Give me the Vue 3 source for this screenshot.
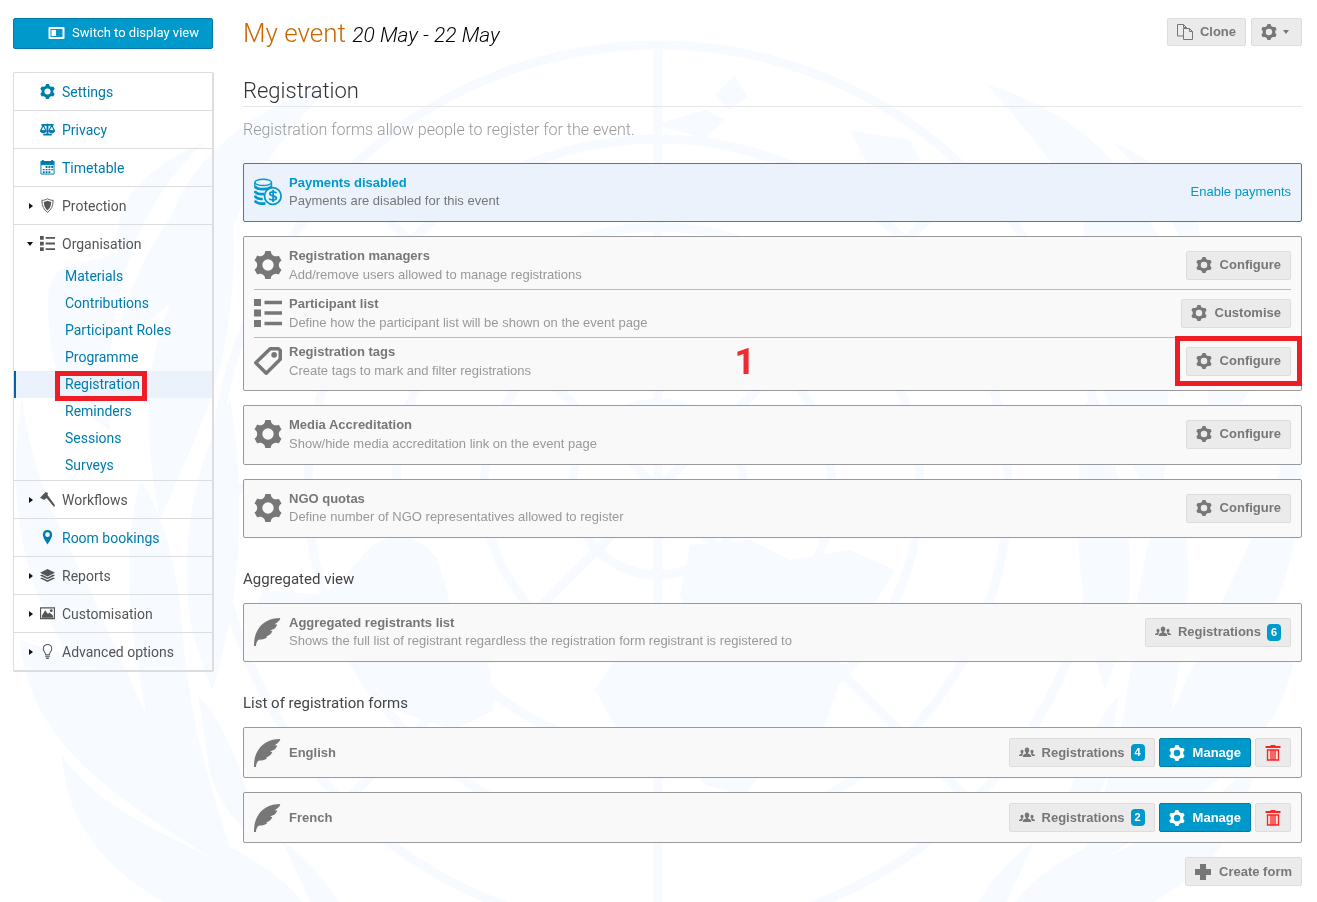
<script setup>
const menuTop = [
  { label: 'Settings', icon: 'gear', link: true },
  { label: 'Privacy', icon: 'scales', link: true },
  { label: 'Timetable', icon: 'calendar', link: true },
  { label: 'Protection', icon: 'shield' },
  {
    label: 'Organisation',
    icon: 'list',
    open: true,
    children: ['Materials', 'Contributions', 'Participant Roles', 'Programme', 'Registration', 'Reminders', 'Sessions', 'Surveys'],
  },
  { label: 'Workflows', icon: 'hammer' },
  { label: 'Room bookings', icon: 'pin', link: true },
  { label: 'Reports', icon: 'stack' },
  { label: 'Customisation', icon: 'image' },
  { label: 'Advanced options', icon: 'bulb' },
]

const groups = [
  {
    roomy: true,
    note: '1',
    rows: [
      { icon: 'gear', title: 'Registration managers', text: 'Add/remove users allowed to manage registrations', action: 'Configure' },
      { icon: 'list', title: 'Participant list', text: 'Define how the participant list will be shown on the event page', action: 'Customise' },
      { icon: 'tag', title: 'Registration tags', text: 'Create tags to mark and filter registrations', action: 'Configure', marked: true },
    ],
  },
  {
    roomy: true,
    rows: [{ icon: 'gear', title: 'Media Accreditation', text: 'Show/hide media accreditation link on the event page', action: 'Configure' }],
  },
  {
    rows: [{ icon: 'gear', title: 'NGO quotas', text: 'Define number of NGO representatives allowed to register', action: 'Configure' }],
  },
]

const forms = [
  { name: 'English', count: 4 },
  { name: 'French', count: 2 },
]
</script>

<template>
  <svg class="sprite" aria-hidden="true">
    <symbol id="i-gear" viewBox="0 0 32 32">
      <path d="M29.181 19.07c-1.679-2.908-.669-6.634 2.255-8.328l-3.145-5.447c-.898.527-1.943.829-3.058.829-3.361 0-6.085-2.742-6.085-6.125h-6.289c.008 1.044-.252 2.103-.811 3.07-1.679 2.908-5.411 3.897-8.339 2.211L.565 10.727c.905.515 1.689 1.268 2.246 2.234 1.676 2.903.672 6.623-2.241 8.319l3.145 5.447c.895-.522 1.935-.821 3.044-.821 3.35 0 6.067 2.725 6.084 6.092h6.289c-.003-1.034.259-2.08.811-3.038 1.676-2.903 5.399-3.894 8.325-2.219l3.145-5.447c-.899-.515-1.678-1.266-2.232-2.226zM16 22.479a6.479 6.479 0 1 1 0-12.958 6.479 6.479 0 0 1 0 12.958z" />
    </symbol>
    <symbol id="i-list" viewBox="0 0 32 32">
      <path d="M0 0h8v8H0zM12 2h20v4H12zM0 12h8v8H0zM12 14h20v4H12zM0 24h8v8H0zM12 26h20v4H12z" />
    </symbol>
    <symbol id="i-tag" viewBox="0 0 32 32">
      <path d="M18.500 2h9.500l2 2v10L14 30 2 18z" fill="none" stroke="currentColor" stroke-width="4" stroke-linejoin="round" />
      <circle cx="23" cy="9" r="3.200" />
    </symbol>
    <symbol id="i-quill" viewBox="0 0 32 32">
      <path d="M0 32C0 25 1 19 4 14 9 5 18 0 30 0c0 2-2 4-3.500 5l-3 2 3 .5c-.5 2-1.800 4-4 5.200l-4 1.500 2.500 1c-1 2-2.500 4-5 5l-2 1 1 .8c-2 2-5 2.700-8.500 2.700C4 25 2.500 28 2.200 32z" />
    </symbol>
    <symbol id="i-coins" viewBox="0 0 32 32">
      <g fill="none" stroke="currentColor" stroke-width="2">
        <ellipse cx="10.500" cy="5" rx="9.500" ry="3.500" stroke-width="1.600" />
        <path d="M1 9.500c2 4 16 4.500 19 0M1 15c1.500 3 6 3.700 10.500 3.300M1 20.500c1.500 3 5 3.700 9 3.500M1 26c2 3 7 3.700 12 3" stroke-width="3" />
        <path d="M1 5v5M20 5v5M1 15v2M1 20v2M1 26v1" stroke-width="1.600" />
        <circle cx="21.500" cy="20.500" r="9.500" />
        <path d="M25.500 17.500c-.5-2-7.500-2.500-7.500.5s7.500 2 7.500 5-7.500 2.500-8 .3M21.800 13.500v14" />
      </g>
    </symbol>
    <symbol id="i-scales" viewBox="0 0 32 32">
      <path d="M3 4h11a3 3 0 0 1 4 0h11v4H18v17h7v4H7v-4h7V8H3z" />
      <path d="M7 7l-6 12h12zM25 7l-6 12h12z" fill="none" stroke="currentColor" stroke-width="2.500" />
      <path d="M0 18h14c0 8-14 8-14 0zM18 18h14c0 8-14 8-14 0z" />
    </symbol>
    <symbol id="i-calendar" viewBox="0 0 32 32">
      <path d="M1 2h3V0h4v2h16V0h4v2h3v8H1z" />
      <path d="M2 10h28v20H2z" fill="none" stroke="currentColor" stroke-width="2" />
      <path d="M12 13h4v4h-4zM18 13h4v4h-4zM24 13h4v4h-4zM6 19h4v3H6zM12 19h4v3h-4zM18 19h4v3h-4zM24 19h4v3h-4zM6 24h4v4H6zM12 24h4v4h-4zM18 24h4v4h-4z" />
    </symbol>
    <symbol id="i-shield" viewBox="0 0 32 32">
      <path d="M16 1.500c4 2.500 8 3.500 12 3.500 0 12-4 20-12 25.500C8 25 4 17 4 5c4 0 8-1 12-3.500z" fill="none" stroke="currentColor" stroke-width="2" />
      <path d="M16 6c3 1.500 5.500 2.300 8 2.600C23.500 17 21 22.500 16 26.500 11 22.500 8.500 17 8 8.600 10.500 8.300 13 7.500 16 6z" />
    </symbol>
    <symbol id="i-hammer" viewBox="0 0 32 32">
      <path d="M0 12L12 0l5 2-1 4 2 3 14 19-2 4-16-19-5 4z" />
    </symbol>
    <symbol id="i-pin" viewBox="0 0 32 32">
      <path d="M16 0c6 0 10 4.300 10 9.800C26 17 16 31 16 31S6 17 6 9.800C6 4.300 10 0 16 0zm0 5a5 5 0 1 0 0 10 5 5 0 0 0 0-10z" />
    </symbol>
    <symbol id="i-stack" viewBox="0 0 32 32">
      <path d="M16 2l16 8-16 8-16-8zM4 14l12 6 12-6 4 2-16 8-16-8zM4 20l12 6 12-6 4 2-16 8-16-8z" />
    </symbol>
    <symbol id="i-image" viewBox="0 0 32 32">
      <path d="M1.200 4h29.600v23H1.200z" fill="none" stroke="currentColor" stroke-width="2.400" />
      <path d="M4 25v-4l7-12 6 8 3-3 8 7v4z" />
      <circle cx="24" cy="10" r="3" />
    </symbol>
    <symbol id="i-bulb" viewBox="0 0 32 32">
      <path d="M12 23c0-5-5-7-5-13a9 9 0 0 1 18 0c0 6-5 8-5 13z" fill="none" stroke="currentColor" stroke-width="2.200" />
      <path d="M11 25h10v2H11zM12 29h8l-2 3h-4z" />
    </symbol>
    <symbol id="i-display" viewBox="0 0 32 24">
      <path d="M2 2h28v20H2z" fill="none" stroke="currentColor" stroke-width="4" stroke-linejoin="round" />
      <path d="M6 6h9v12H6z" />
    </symbol>
    <symbol id="i-copy" viewBox="0 0 32 32">
      <path d="M13 24H1V1h12l6 6v3M13 1v6h6M13 9h12l6 6v16H13zM25 9v6h6" fill="none" stroke="currentColor" stroke-width="2" />
    </symbol>
    <symbol id="i-users" viewBox="0 0 32 32">
      <path d="M16 5c3 0 4.500 2 4.500 5 0 2.500-1 4.500-2.200 5.500v2c4 .7 6.200 2.500 6.200 6.500h-17c0-4 2.200-5.800 6.200-6.500v-2c-1.200-1-2.200-3-2.200-5.500 0-3 1.500-5 4.500-5z" />
      <path d="M6 9.500c2 0 3 1.500 3 3.500 0 1.700-.6 3-1.500 3.700v1.300l1 .3c-1.600 1-2.400 2.300-2.600 3.700H0c0-2.800 1.500-3.700 4.500-4v-1.300C3.600 16 3 14.700 3 13c0-2 1-3.500 3-3.500zM26 9.500c2 0 3 1.500 3 3.500 0 1.700-.6 3-1.500 3.700V18c3 .3 4.500 1.200 4.500 4h-5.900c-.2-1.400-1-2.700-2.600-3.700l1-.3v-1.300c-.9-.7-1.500-2-1.500-3.700 0-2 1-3.500 3-3.500z" />
    </symbol>
    <symbol id="i-trash" viewBox="0 0 32 32">
      <path d="M1 2h10V0h10v2h10v4H1z" />
      <path d="M5 10v20h22V10zM12 10v19M16 10v19M20 10v19" fill="none" stroke="currentColor" stroke-width="2.700" />
    </symbol>
    <symbol id="i-plus" viewBox="0 0 32 32">
      <path d="M10 0h12v10h10v12H22v10H10V22H0V10h10z" />
    </symbol>
  </svg>

  <svg class="emblem" viewBox="0 0 1317 902" preserveAspectRatio="xMidYMin slice" aria-hidden="true">
    <g fill="none" stroke="#f7faff" stroke-width="9">
      <circle cx="658" cy="489" r="444" />
      <circle cx="658" cy="489" r="350" />
      <circle cx="658" cy="489" r="262" />
      <circle cx="658" cy="489" r="174" />
      <circle cx="658" cy="489" r="86" />
      <path d="M658 45v888M214 489h888M344 175l628 628M972 175L344 803" />
    </g>
    <g fill="#f7faff">
      <path d="M360 560c10-20 50-40 78 0l14 50 38 60 4 40-40 20-60-20-40-50-60-30-40-20 10-20 60 5z" />
      <path d="M595 690l20-30 50-10 90 10 30-25 60 30-20 60-50 30-30 40-40-10-20-30-60-10z" />
      <path d="M690 545l60-5 40 20 60-10 45 20-30 50-45 10-20 30-50-20-50 5-20-50z" />
      <path d="M715 95l20-20 12 22-18 14zM655 125l50-15 20 10-20 18zM850 130l60 10 10 20-50 10z" />
    </g>
    <g fill="#f7faff">
      <g id="laurel">
        <path d="M330 85C255 105 190 160 172 215 150 245 122 300 118 340 170 310 215 270 236 220 255 170 290 130 330 85z" />
        <path d="M205 142C140 170 112 205 118 250 95 270 50 250 48 300 48 370 62 400 110 430 104 330 120 220 205 142z" />
        <path d="M232 218C190 250 160 310 150 380 147 430 150 470 160 520 190 450 215 400 226 340 232 300 236 260 232 218z" />
        <path d="M22 398C10 470 12 560 60 640 75 690 120 740 200 850 170 760 120 660 90 590 60 530 30 470 22 398z" />
        <path d="M20 640C30 740 100 790 235 872 200 800 110 690 80 660z" />
        <path d="M140 480C120 560 130 640 152 740 165 790 190 830 232 852 200 760 185 690 180 600 170 540 160 510 140 480z" />
        <path d="M230 400C195 460 180 540 190 620 196 650 205 670 212 690 235 620 250 520 230 400z" />
        <path d="M198 695C212 770 200 790 258 842 250 790 230 730 198 695z" />
        <path d="M62 755C66 840 130 890 200 920L310 920C230 850 110 830 62 755z" />
        <path d="M220 842l32 70h58c-20-30-50-50-90-70zM283 842c20 12 45 40 62 70h-30z" />
      </g>
      <use href="#laurel" transform="matrix(-1 0 0 1 1317 0)" />
    </g>
  </svg>

  <div class="page">
    <aside class="side">
      <button class="switch" type="button">
        <svg class="switch-icon" aria-hidden="true"><use href="#i-display" /></svg>
        Switch to display view
      </button>
      <nav class="menu">
        <div v-for="item in menuTop" :key="item.label" class="menu-block">
          <component :is="item.link ? 'a' : 'button'" :href="item.link ? '#' : undefined" class="menu-item" :class="{ link: item.link }">
            <span class="caret" :class="{ none: item.link, open: item.open }"></span>
            <svg class="menu-icon" aria-hidden="true"><use :href="'#i-' + item.icon" /></svg>
            {{ item.label }}
          </component>
          <ul v-if="item.children" class="submenu">
            <li v-for="child in item.children" :key="child" :class="{ active: child === 'Registration' }">
              <a href="#">{{ child }}<span v-if="child === 'Registration'" class="mark mark-menu"></span></a>
            </li>
          </ul>
        </div>
      </nav>
    </aside>

    <main class="main">
      <header class="top">
        <h1>My event <em>20 May - 22 May</em></h1>
        <div class="actions">
          <button class="btn" type="button"><svg class="icon" aria-hidden="true"><use href="#i-copy" /></svg>Clone</button>
          <button class="btn menu-btn" type="button" aria-label="Event options">
            <svg class="icon" aria-hidden="true"><use href="#i-gear" /></svg><span class="drop"></span>
          </button>
        </div>
      </header>

      <h2>Registration</h2>
      <p class="lead">Registration forms allow people to register for the event.</p>

      <section class="box info">
        <div class="row">
          <svg class="big" aria-hidden="true"><use href="#i-coins" /></svg>
          <div class="text"><strong>Payments disabled</strong><p>Payments are disabled for this event</p></div>
          <a href="#">Enable payments</a>
        </div>
      </section>

      <section v-for="(group, g) in groups" :key="g" class="box" :class="{ roomy: group.roomy }">
        <div v-for="row in group.rows" :key="row.title" class="row">
          <svg class="big" aria-hidden="true"><use :href="'#i-' + row.icon" /></svg>
          <div class="text"><strong>{{ row.title }}</strong><p>{{ row.text }}</p></div>
          <button class="btn" type="button">
            <svg class="icon" aria-hidden="true"><use href="#i-gear" /></svg>{{ row.action }}
            <span v-if="row.marked" class="mark mark-btn"></span>
          </button>
        </div>
        <span v-if="group.note" class="note">{{ group.note }}</span>
      </section>

      <h3>Aggregated view</h3>
      <section class="box">
        <div class="row">
          <svg class="big" aria-hidden="true"><use href="#i-quill" /></svg>
          <div class="text">
            <strong>Aggregated registrants list</strong>
            <p>Shows the full list of registrant regardless the registration form registrant is registered to</p>
          </div>
          <button class="btn count" type="button"><svg class="icon" aria-hidden="true"><use href="#i-users" /></svg>Registrations<span class="badge">6</span></button>
        </div>
      </section>

      <h3>List of registration forms</h3>
      <section v-for="form in forms" :key="form.name" class="box form">
        <div class="row">
          <svg class="big" aria-hidden="true"><use href="#i-quill" /></svg>
          <div class="text"><strong>{{ form.name }}</strong></div>
          <div class="actions">
            <button class="btn count" type="button"><svg class="icon" aria-hidden="true"><use href="#i-users" /></svg>Registrations<span class="badge">{{ form.count }}</span></button>
            <button class="btn primary" type="button"><svg class="icon" aria-hidden="true"><use href="#i-gear" /></svg>Manage</button>
            <button class="btn danger" type="button" aria-label="Delete form"><svg class="icon" aria-hidden="true"><use href="#i-trash" /></svg></button>
          </div>
        </div>
      </section>

      <div class="actions end">
        <button class="btn" type="button"><svg class="icon" aria-hidden="true"><use href="#i-plus" /></svg>Create form</button>
      </div>
    </main>
  </div>
</template>

<style>
body {
  background: #fff;
}
</style>

<style scoped>
* {
  box-sizing: border-box;
}
svg {
  fill: currentColor;
  flex: none;
}
button {
  font: inherit;
  cursor: pointer;
}
a {
  color: #0099cc;
  text-decoration: none;
}
h1, h2, h3, p, ul {
  margin: 0;
  padding: 0;
}
.sprite {
  position: absolute;
  width: 0;
  height: 0;
}
.emblem {
  position: fixed;
  inset: 0;
  width: 100%;
  height: 100%;
  z-index: -1;
}
.page {
  display: flex;
  gap: 29px;
  padding: 18px 15px 17px 13px;
  font: 13px/18px "Liberation Sans", Arial, sans-serif;
  color: #777;
}
.side {
  flex: none;
  width: 201px;
  font-family: Roboto, sans-serif;
}
.switch {
  display: flex;
  align-items: center;
  justify-content: flex-end;
  gap: 7px;
  width: 200px;
  height: 31px;
  padding: 0 13px 2px;
  color: #fff;
  background: #0099cc;
  border: 1px solid #007cac;
  border-radius: 2px;
}
.switch-icon {
  width: 17px;
  height: 12px;
}
.menu {
  margin-top: 23px;
  border: 1px solid #ddd;
  border-right-width: 2px;
  border-bottom-width: 2px;
  border-radius: 2px;
}
.menu-block + .menu-block {
  border-top: 1px solid #ddd;
}
.menu-item {
  display: flex;
  align-items: center;
  width: 100%;
  height: 37px;
  padding: 0 12px;
  font-size: 14px;
  color: #555;
  background: none;
  border: 0;
}
.menu-item.link,
.submenu a {
  color: #007cac;
}
.caret {
  width: 8px;
  margin-right: 6px;
}
.caret::before {
  content: "";
  display: block;
  width: 0;
  margin-left: 3px;
  border: 3px solid transparent;
  border-left: 4px solid #111;
  border-right: 0;
}
.caret.open::before {
  margin-left: 1px;
  border: 3px solid transparent;
  border-top: 4px solid #111;
  border-bottom: 0;
}
.caret.none::before {
  visibility: hidden;
}
.menu-icon {
  width: 15px;
  height: 15px;
  margin-right: 7px;
}
.submenu {
  list-style: none;
  padding: 1px 0;
}
.submenu li {
  height: 27px;
  padding-left: 51px;
  font-size: 14px;
  line-height: 27px;
}
.submenu .active {
  padding-left: 49px;
  background: #ebf2fc;
  border-left: 2px solid #0b5fa5;
}
.submenu a {
  position: relative;
  display: inline-block;
}
.mark {
  position: absolute;
  border: 5px solid #ee1c25;
}
.mark-menu {
  inset: 0 -7px -3px -10px;
}
.mark-btn {
  inset: -12px -12px -11px -12px;
}
.main {
  flex: 1;
  min-width: 0;
}
.top {
  display: flex;
  justify-content: space-between;
  align-items: flex-start;
  height: 58px;
}
h1 {
  font: 300 26px/30px Roboto, sans-serif;
  color: #cc6600;
}
h1 em {
  font-size: 21px;
  color: #000;
}
.actions {
  display: flex;
  gap: 4px;
}
.top .actions {
  gap: 5px;
}
.top .btn {
  height: 28px;
  gap: 7px;
}
.end {
  justify-content: flex-end;
}
h2 {
  font: 300 22px/30px Roboto, sans-serif;
  color: #333;
  border-bottom: 1px solid #e6e6e6;
}
.lead {
  margin: 13px 0 23px;
  font: 300 16px/20px Roboto, sans-serif;
  color: #999;
}
h3 {
  margin: 31px 0 14px;
  font: 400 15px/20px Roboto, sans-serif;
  color: #444;
}
.box {
  position: relative;
  margin-bottom: 14px;
  padding: 10px 10px 11px;
  background: #f9f9f9;
  border: 1px solid #999;
  border-radius: 2px;
}
.row {
  display: flex;
  align-items: center;
}
.big {
  width: 28px;
  height: 28px;
  margin-right: 7px;
}
.text {
  flex: 1;
  min-width: 0;
}
.text p {
  color: #999;
}
.info {
  background: #ebf2fc;
  border-color: #0099cc;
}
.info .big,
.info strong {
  color: #0099cc;
}
.info p {
  color: #777;
}
.roomy {
  padding: 5px 10px;
  line-height: 19px;
}
.roomy .row {
  padding: 4px 0 5px;
}
.roomy .row:first-child:nth-last-child(1) {
  padding-bottom: 6px;
}
.roomy .row + .row {
  border-top: 1px solid #bbb;
}
.form {
  padding: 10px;
}
.note {
  position: absolute;
  left: calc(50% - 38px);
  bottom: 10px;
  font: 700 36px/36px Roboto, sans-serif;
  color: #ee2a33;
}
.btn {
  position: relative;
  display: flex;
  align-items: center;
  gap: 8px;
  height: 29px;
  padding: 0 9px;
  font-weight: 700;
  line-height: 18px;
  color: #777;
  background: #ebebeb;
  border: 1px solid #ddd;
  border-radius: 2px;
}
.count {
  gap: 7px;
}
.icon {
  width: 16px;
  height: 16px;
}
.top .menu-btn {
  gap: 6px;
  padding-right: 12px;
}
.drop {
  border: 3px solid transparent;
  border-top: 4px solid #777;
  border-bottom: 0;
}
.primary {
  color: #fff;
  background: #0099cc;
  border-color: #007cac;
}
.danger {
  color: #f22;
}
.badge {
  width: 14px;
  height: 17px;
  margin-left: -1px;
  font-size: 11px;
  line-height: 17px;
  text-align: center;
  color: #fff;
  background: #0099cc;
  border-radius: 4px;
}
</style>
